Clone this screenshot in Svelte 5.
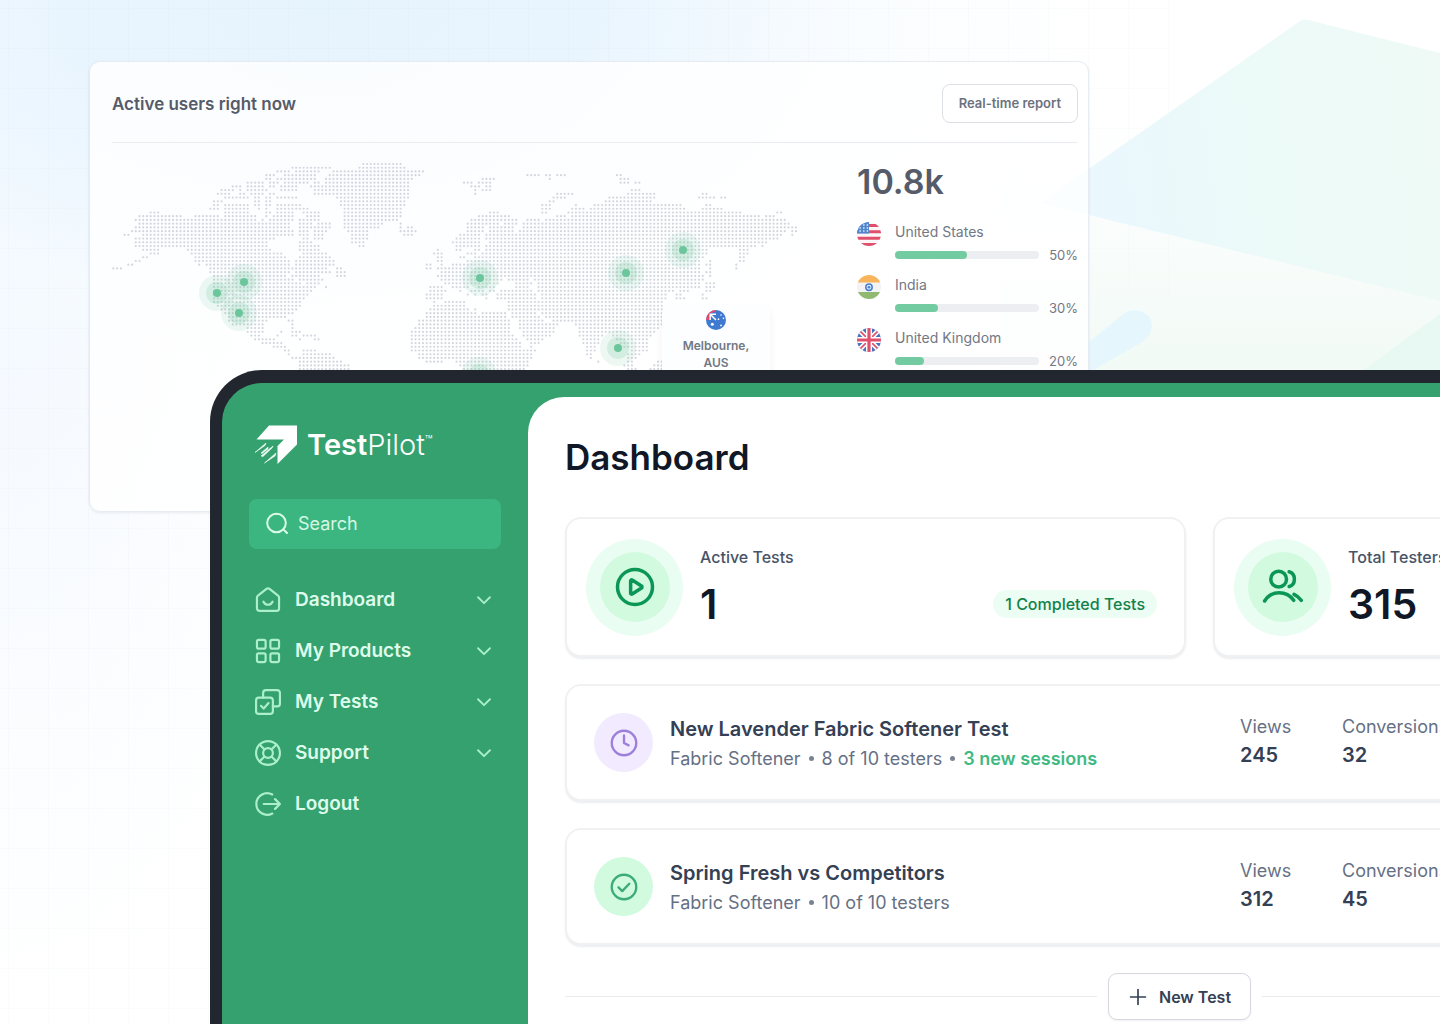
<script lang="ts">
  interface Country {
    name: string;
    flag: string;
    share: number;
  }

  interface Test {
    title: string;
    category: string;
    testers: string;
    sessions?: string;
    status: 'pending' | 'done';
    views: number;
    conversions: number;
  }

  const countries: Country[] = [
    { name: 'United States', flag: 'us', share: 50 },
    { name: 'India', flag: 'in', share: 30 },
    { name: 'United Kingdom', flag: 'gb', share: 20 },
  ];

  const navItems = [
    { label: 'Dashboard', icon: 'home', expandable: true },
    { label: 'My Products', icon: 'grid', expandable: true },
    { label: 'My Tests', icon: 'checks', expandable: true },
    { label: 'Support', icon: 'buoy', expandable: true },
    { label: 'Logout', icon: 'logout', expandable: false },
  ];

  const tests: Test[] = [
    {
      title: 'New Lavender Fabric Softener Test',
      category: 'Fabric Softener',
      testers: '8 of 10 testers',
      sessions: '3 new sessions',
      status: 'pending',
      views: 245,
      conversions: 32,
    },
    {
      title: 'Spring Fresh vs Competitors',
      category: 'Fabric Softener',
      testers: '10 of 10 testers',
      status: 'done',
      views: 312,
      conversions: 45,
    },
  ];

  // Land on the map, one string per row of dots, each with its runs of columns.
  const land: string[] = [
    '67-77',
    '48-58 66-78',
    '44-47 49-55 59-78 79-83',
    '41-43 46-54 58-82 111-114 116-117 119-121 135-136',
    '41-42 44-54 57-80 99-102 117-117 136-138',
    '36-40 42-44 46-52 54-55 57-79 94-96 98-101 136-138 140-141',
    '32-34 36-40 42-43 45-49 53-79 96-98 100-101',
    '29-32 34-34 36-41 45-49 54-79 97-97 99-101 139-141',
    '28-31 34-35 37-40 42-43 54-79 97-97 119-123 138-145 158-159',
    '30-36 38-39 41-42 44-49 60-79 118-121 133-145 157-161 163-164',
    '27-29 38-39 41-42 61-78 117-118 132-144',
    '27-28 30-36 38-39 41-42 44-50 61-78 115-117 124-124 129-152 159-160',
    '26-28 30-36 39-39 41-41 44-52 62-77 115-117 123-126 128-153 158-163',
    '10-12 30-36 41-42 44-48 51-55 62-77 101-103 115-116 122-168 178-179',
    '7-18 22-28 30-38 41-41 43-48 52-55 62-77 98-106 119-121 123-173 175-177',
    '6-38 40-40 42-48 50-55 62-76 96-108 111-114 116-180',
    '7-47 50-53 55-58 62-72 77-77 95-103 105-108 110-181',
    '6-47 50-58 62-71 77-77 79-80 95-99 101-107 110-183',
    '5-48 50-52 54-57 63-68 77-81 95-99 101-107 109-180 182-183',
    '3-4 8-48 50-52 54-56 64-68 78-80 93-98 100-179 182-182',
    '6-43 51-52 54-56 64-68 92-98 100-178',
    '6-41 50-53 64-67 91-98 101-175',
    '6-41 50-55 66-67 92-94 95-98 100-172 174-174',
    '8-12 20-42 50-55 87-87 92-93 97-98 100-159 168-170',
    '10-12 21-45 51-57 86-88 95-97 99-159 168-170',
    '8-9 22-46 50-58 87-88 93-94 97-158 168-169',
    '6-7 22-47 49-59 87-88 95-157 160-160 168-169',
    '4-5 23-23 25-47 49-59 84-85 88-88 91-157 159-160 167-167',
    '0-2 26-57 60-61 84-85 87-89 90-157 160-160 167-167',
    '26-47 49-58 60-62 88-157 159-160',
    '27-46 48-55 60-62 87-158 160-160',
    '27-48 50-56 88-104 106-111 113-158',
    '27-50 52-55 89-103 108-112 114-157 159-161',
    '27-54 57-57 85-88 91-95 98-102 108-111 114-157 159-161',
    '27-53 85-89 93-93 96-99 101-102 104-112 114-150 152-154 159-160',
    '27-52 84-88 95-95 97-97 99-100 103-113 115-148 151-152 158-158',
    '27-51 84-88 100-100 103-113 115-148 151-153 158-159',
    '27-50 86-86 89-94 106-147',
    '28-50 86-94 106-147',
    '29-49 85-95 97-97 106-147',
    '30-48 84-97 99-105 107-113 115-147',
    '31-46 84-105 107-114 116-147',
    '31-41 47-48 82-106 109-115 118-147',
    '32-40 48-48 82-106 109-119 124-147',
    '36-40 48-48 81-106 109-118 125-146',
    '36-40 45-45 48-50 80-106 110-118 125-145',
    '37-39 44-44 48-49 51-54 80-107 110-117 125-131 134-144',
    '38-43 50-50 54-55 80-108 111-115 126-130 135-143',
    '40-45 80-109 112-114 126-130 136-143',
    '43-46 80-109 112-112 127-129 137-143',
    '46-47 51-54 80-113 127-129 139-143',
    '47-47 51-58 82-112 127-128 138-141',
    '48-59 82-112 128-128 138-140',
    '50-61 84-88 92-111 130-130 138-139 146-147',
    '50-63 93-111 137-139 145-147',
    '50-63 94-110 138-140 144-147',
  ];

  const pitch = 3.73;

  const landPath = land
    .map((row, y) =>
      row
        .split(' ')
        .map((run) => {
          const [from, to] = run.split('-').map(Number);
          return `M${(1.4 + from * pitch).toFixed(2)} ${(2 + y * pitch).toFixed(2)}H${(1.6 + to * pitch).toFixed(2)}`;
        })
        .join('')
    )
    .join('');

  const pins = [
    [105, 131],
    [132, 120],
    [127, 151],
    [368, 116],
    [514, 111],
    [571, 88],
    [506, 186],
    [367, 213],
  ];
</script>

{#snippet unionJack()}
  <rect width="24" height="24" fill="#4a72b8" />
  <path d="M0 0L24 24M24 0L0 24" stroke="#fff" stroke-width="5" />
  <path d="M0 0L24 24M24 0L0 24" stroke="#e0506c" stroke-width="1.6" />
  <path d="M12 0V24M0 12H24" stroke="#fff" stroke-width="6" />
  <path d="M12 0V24M0 12H24" stroke="#e0506c" stroke-width="3.2" />
{/snippet}

{#snippet flag(code: string)}
  <svg class="flag" viewBox="0 0 24 24" aria-hidden="true">
    {#if code === 'us'}
      <rect width="24" height="24" fill="#fbf6f7" />
      <path d="M0 3.500H24M0 9.800H24M0 16.200H24M0 22.500H24" stroke="#e0506c" stroke-width="3" />
      <rect width="12" height="11.500" fill="#4f86cf" />
      <path d="M2.500 3H12M2.500 6H12M2.500 9H12" stroke="#e6effa" stroke-width="1.400" stroke-dasharray="1.400 2.200" />
    {:else if code === 'in'}
      <rect width="24" height="24" fill="#f3f3f5" />
      <rect width="24" height="7.5" fill="#f9b55c" />
      <rect y="17" width="24" height="7" fill="#90ba70" />
      <circle cx="12" cy="12.2" r="3.2" fill="#dfeafa" stroke="#4a7fd0" stroke-width="1.5" />
      <circle cx="12" cy="12.2" r="1.3" fill="#4a7fd0" />
    {:else if code === 'gb'}
      {@render unionJack()}
    {:else}
      <rect width="24" height="24" fill="#3f7ad0" />
      <path d="M0 12V0H12V2.500L4 4V12z" fill="#e5496a" />
      <path d="M5 12V5H12M5 5l7 7" fill="none" stroke="#fff" stroke-width="1.800" />
      <g fill="#fff">
        <circle cx="7.5" cy="17" r="1.8" />
        <circle cx="18" cy="6" r="1" />
        <circle cx="15" cy="11" r="1" />
        <circle cx="21" cy="10" r="1" />
        <circle cx="18" cy="18.5" r="1.1" />
      </g>
    {/if}
  </svg>
{/snippet}

{#snippet icon(name: string)}
  <svg class="icon" viewBox="0 0 24 24" aria-hidden="true">
    {#if name === 'home'}
      <path d="M1.8 9.6c0-.7.3-1.3.9-1.7l7.9-6.2c.8-.6 2-.6 2.8 0l7.9 6.2c.6.4.9 1 .9 1.700v10.200c0 1.200-1 2.200-2.200 2.200H4c-1.200 0-2.200-1-2.200-2.200z" />
      <path d="M7.800 13.600c.8 1.800 2.400 2.800 4.200 2.800s3.400-1 4.200-2.800" />
    {:else if name === 'grid'}
      <rect x="1.800" y="1.800" width="8" height="8" rx="1.600" />
      <rect x="14.200" y="1.800" width="8" height="8" rx="1.600" />
      <rect x="1.800" y="14.200" width="8" height="8" rx="1.600" />
      <rect x="14.200" y="14.200" width="8" height="8" rx="1.600" />
    {:else if name === 'checks'}
      <rect x="1" y="8" width="15.500" height="15" rx="2.500" />
      <path d="M7.500 8V3.500A2.500 2.500 0 0 1 10 1h10.500A2.500 2.500 0 0 1 23 3.500v10a2.500 2.500 0 0 1-2.500 2.500h-4" />
      <path d="M5.500 15.500l2.500 2.500 4.500-5" />
    {:else if name === 'buoy'}
      <circle cx="12" cy="12" r="11" />
      <circle cx="12" cy="12" r="4.500" />
      <path d="M4.200 4.200l4.600 4.600M15.200 15.200l4.600 4.600M19.800 4.200l-4.600 4.600M8.800 15.200l-4.600 4.600" />
    {:else if name === 'logout'}
      <path d="M16 3.200A10 10 0 1 0 16 20.800M8 12H23M18.500 7.500L23 12l-4.500 4.500" />
    {:else if name === 'search'}
      <path d="M22 21l-3.600-3.600M20.800 11a9.300 9.300 0 1 1-18.600 0 9.300 9.300 0 0 1 18.600 0z" />
    {:else if name === 'chevron'}
      <path d="M5.500 9l6.500 6.500L18.500 9" />
    {:else if name === 'play'}
      <circle cx="12" cy="12" r="10" />
      <path d="M9.500 8.500v7c0 .5.500.700.900.500l5.300-3.400c.4-.3.400-.9 0-1.200L10.400 8c-.4-.2-.9 0-.9.500z" />
    {:else if name === 'users'}
      <circle cx="9.500" cy="7.500" r="4.500" />
      <path d="M15.500 3.300c2.100.6 3 2.300 3 4.200s-.9 3.600-3 4.200" />
      <path d="M1.500 20C3.400 16.900 6.500 15.300 9.800 15.300s6.400 1.600 8.300 4.300M18.300 16.200c1.600.7 2.900 1.700 4.100 3.400" />
    {:else if name === 'clock'}
      <circle cx="12" cy="12" r="10.500" />
      <path d="M12 5.500V12l4 2" />
    {:else if name === 'check'}
      <circle cx="12" cy="12" r="10.500" />
      <path d="M7.300 12.300l3.200 3.200 6-6.300" />
    {:else if name === 'plus'}
      <path d="M12 3V21M3 12H21" />
    {/if}
  </svg>
{/snippet}

<div class="page">
  <div class="backdrop">
    <div class="gridlines"></div>
    <svg class="shapes" viewBox="0 0 440 380" aria-hidden="true">
      <defs>
        <linearGradient id="facet" x1="0" y1="0.600" x2="1" y2="0.500">
          <stop offset="0.100" stop-color="#eaf7fe" />
          <stop offset="0.550" stop-color="#ecfaf8" />
          <stop offset="1" stop-color="#effaf6" />
        </linearGradient>
        <linearGradient id="glow" x1="0" y1="0" x2="0" y2="1">
          <stop offset="0.300" stop-color="#f3faf8" stop-opacity="0" />
          <stop offset="1" stop-color="#f1faf5" />
        </linearGradient>
      </defs>
      <rect width="440" height="380" fill="url(#glow)" />
      <path d="M40 203L300 21q4-2 8-1L440 53V301z" fill="url(#facet)" />
      <path d="M440 314V380H350z" fill="#e8f9f4" />
      <path d="M88 343L122 315c16-13 38 3 27 20q-4 6-10 9L88 373z" fill="#e6f6fd" />
    </svg>
  </div>

  <section class="users">
    <header class="users-header">
      <h2>Active users right now</h2>
      <button class="report">Real-time report</button>
    </header>
    <div class="users-body">
      <div class="map">
        <svg viewBox="0 0 690 320" role="img" aria-label="World map of active users">
          <path class="land" d={landPath} stroke-dasharray="0 {pitch}" />
          {#each pins as [x, y]}
            <g class="pin">
              <circle cx={x} cy={y} r="18" opacity="0.120" />
              <circle cx={x} cy={y} r="11" opacity="0.200" />
              <circle cx={x} cy={y} r="4" />
            </g>
          {/each}
        </svg>
        <div class="place">
          {@render flag('au')}
          <span>Melbourne, AUS</span>
        </div>
      </div>
      <div class="totals">
        <strong class="total">10.8k</strong>
        <ul>
          {#each countries as country}
            <li>
              {@render flag(country.flag)}
              <div class="country">
                <span>{country.name}</span>
                <div class="share">
                  <div class="bar"><div class="fill" style="width: {country.share}%"></div></div>
                  <span>{country.share}%</span>
                </div>
              </div>
            </li>
          {/each}
        </ul>
      </div>
    </div>
  </section>

  <div class="tablet">
    <aside>
      <a class="logo" href="/">
        <svg viewBox="0 0 44 40" aria-hidden="true">
          <path d="M14 0.500H42V19.500L22.500 39V21L29 14.500H1.500z" fill="#fff" />
          <path d="M11 18L0 27.500 10 20.500zM18 21L6 31 8 31.500 17 23zM21 28L9.500 38 20 31zM13 22L6 28 7 28.500 13 24z" fill="#f0fdf6" stroke="#f0fdf6" stroke-width="0.600" />
        </svg>
        <span class="wordmark"><b>Test</b>Pilot<sup>™</sup></span>
      </a>
      <label class="search">
        {@render icon('search')}
        <input type="search" placeholder="Search" aria-label="Search" />
      </label>
      <nav>
        {#each navItems as item}
          <a href="/">
            {@render icon(item.icon)}
            <span>{item.label}</span>
            {#if item.expandable}
              <span class="chevron">{@render icon('chevron')}</span>
            {/if}
          </a>
        {/each}
      </nav>
    </aside>

    <main>
      <h1>Dashboard</h1>
      <div class="stats">
        <div class="card stat">
          <div class="ring"><div>{@render icon('play')}</div></div>
          <div class="stat-body">
            <span class="stat-label">Active Tests</span>
            <div class="stat-row">
              <strong>1</strong>
              <span class="badge">1 Completed Tests</span>
            </div>
          </div>
        </div>
        <div class="card stat">
          <div class="ring"><div>{@render icon('users')}</div></div>
          <div class="stat-body">
            <span class="stat-label">Total Testers</span>
            <div class="stat-row">
              <strong>315</strong>
            </div>
          </div>
        </div>
      </div>

      {#each tests as test}
        <article class="card test">
          <div class="status {test.status}">{@render icon(test.status === 'done' ? 'check' : 'clock')}</div>
          <div class="test-text">
            <h3>{test.title}</h3>
            <p>
              <span>{test.category}</span>
              <i></i>
              <span>{test.testers}</span>
              {#if test.sessions}
                <i></i>
                <b>{test.sessions}</b>
              {/if}
            </p>
          </div>
          <dl>
            <div>
              <dt>Views</dt>
              <dd>{test.views}</dd>
            </div>
            <div>
              <dt>Conversions</dt>
              <dd>{test.conversions}</dd>
            </div>
          </dl>
        </article>
      {/each}

      <div class="new-test">
        <button>{@render icon('plus')}New Test</button>
      </div>
    </main>
  </div>
</div>

<style>
  :global(body) {
    margin: 0;
  }

  .page {
    display: grid;
    min-height: 100vh;
    overflow: hidden;
    position: relative;
    background:
      radial-gradient(ellipse 760px 460px at 330px 0, #e6f4fe 0%, #e9f5fe 35%, rgba(246, 251, 255, 0.6) 70%, rgba(255, 255, 255, 0) 100%),
      radial-gradient(ellipse 360px 900px at 0 100px, #f0f7ff 0%, rgba(250, 252, 255, 0.8) 70%, rgba(255, 255, 255, 0) 100%),
      #fff;
    font-family: Inter, 'Liberation Sans', sans-serif;
    color: #475467;
  }

  .page * {
    box-sizing: border-box;
  }

  .page > * {
    grid-area: 1 / 1;
  }

  .backdrop {
    position: absolute;
    inset: 0;
  }

  .gridlines {
    position: absolute;
    inset: 0 270px 0 0;
    background:
      repeating-linear-gradient(90deg, rgba(120, 160, 170, 0.03) 0 1px, transparent 1px 40px) 8px 0,
      repeating-linear-gradient(rgba(120, 160, 170, 0.03) 0 1px, transparent 1px 40px) 0 8px;
  }

  .shapes {
    position: absolute;
    top: 0;
    right: 0;
    width: 440px;
    height: 380px;
  }

  h1,
  h2,
  h3,
  p,
  ul,
  dl,
  dd {
    margin: 0;
    padding: 0;
  }

  button {
    font-family: inherit;
    font-weight: 600;
    cursor: pointer;
  }

  .icon {
    display: block;
    flex: none;
    width: 26px;
    height: 26px;
    fill: none;
    stroke: currentColor;
    stroke-width: 2;
    stroke-linecap: round;
    stroke-linejoin: round;
  }

  .flag {
    flex: none;
    width: 24px;
    height: 24px;
    border-radius: 50%;
  }

  /* active users */
  .users {
    position: relative;
    align-self: start;
    width: 1000px;
    height: 451px;
    margin: 61px 0 0 89px;
    padding: 22px 10px 0 22px;
    border: 1px solid #e6ecf2;
    border-radius: 11px;
    background: rgba(255, 255, 255, 0.8);
    box-shadow: 0 1px 3px rgba(16, 24, 40, 0.08);
  }

  .users-header {
    display: flex;
    justify-content: space-between;
    align-items: center;
    padding-bottom: 19px;
    border-bottom: 1px solid #e9edf1;
  }

  h2 {
    font-size: 17px;
    line-height: 28px;
    font-weight: 600;
    color: #555b68;
  }

  .report {
    height: 39px;
    padding: 0 16px 2px;
    border: 1px solid #dcdfe4;
    border-radius: 8px;
    background: #fff;
    font-size: 13px;
    color: #6b7280;
  }

  .users-body {
    display: flex;
    justify-content: space-between;
    padding-top: 19px;
  }

  .map {
    position: relative;
    width: 690px;
  }

  .map > svg {
    display: block;
    width: 690px;
  }

  .land {
    fill: none;
    stroke: #d3d6df;
    stroke-width: 2.2;
    stroke-linecap: round;
  }

  .pin {
    fill: #6cc69c;
  }

  .place {
    position: absolute;
    top: 143px;
    left: 550px;
    display: flex;
    flex-direction: column;
    align-items: center;
    gap: 7px;
    width: 108px;
    padding: 5px 20px 16px;
    border-radius: 8px;
    background: #fcfeff;
    box-shadow: 0 4px 8px rgba(16, 24, 40, 0.06);
    font-size: 12px;
    line-height: 17px;
    font-weight: 600;
    text-align: center;
    color: #727885;
  }

  .place .flag {
    width: 20px;
    height: 20px;
  }

  .totals {
    width: 221px;
  }

  .total {
    display: block;
    margin-bottom: 20px;
    font-size: 34px;
    line-height: 40px;
    font-weight: 600;
    color: #555b68;
  }

  ul {
    display: flex;
    flex-direction: column;
    gap: 10px;
    list-style: none;
  }

  li {
    display: flex;
    gap: 14px;
    font-size: 14px;
    line-height: 20px;
    color: #727885;
  }

  .country {
    flex: 1;
    display: flex;
    flex-direction: column;
    gap: 3px;
  }

  .share {
    display: flex;
    justify-content: space-between;
    align-items: center;
    font-size: 13px;
  }

  .bar {
    width: 144px;
    height: 8px;
    border-radius: 4px;
    background: #eceef1;
  }

  .fill {
    height: 8px;
    border-radius: 4px;
    background: #73cba2;
  }

  /* tablet */
  .tablet {
    position: relative;
    display: flex;
    width: calc(100vw + 193px);
    margin: 370px 0 0 210px;
    border: solid #22262f;
    border-width: 13px 12px 0;
    border-radius: 52px 52px 0 0;
    background: #35a16f;
  }

  aside {
    flex: none;
    width: 306px;
    padding: 42px 27px 0;
  }

  .logo {
    display: flex;
    align-items: center;
    gap: 8px;
    height: 40px;
    padding-left: 6px;
    color: #fff;
    text-decoration: none;
  }

  .logo svg {
    width: 44px;
    height: 40px;
  }

  .wordmark {
    font-size: 29px;
    line-height: 40px;
    font-weight: 300;
  }

  .wordmark b {
    font-weight: 600;
  }

  .wordmark sup {
    font-size: 13px;
    line-height: 10px;
    vertical-align: 10px;
  }

  .search {
    display: flex;
    align-items: center;
    gap: 9px;
    height: 50px;
    margin: 34px 0 25px;
    padding: 0 16px;
    border-radius: 8px;
    background: #3cb680;
    color: #dcfbe9;
  }

  .search .icon {
    width: 24px;
    height: 24px;
  }

  .search input {
    flex: 1;
    min-width: 0;
    padding: 0;
    border: 0;
    outline: 0;
    background: none;
    font: 400 18px/28px Inter, sans-serif;
    color: inherit;
  }

  .search input::placeholder {
    color: #d5f8e5;
    opacity: 1;
  }

  nav a {
    display: flex;
    align-items: center;
    gap: 14px;
    height: 51px;
    padding: 0 6px;
    font-size: 19px;
    font-weight: 600;
    color: #defceb;
    text-decoration: none;
  }

  nav .icon {
    color: #abf0c8;
  }

  .chevron {
    margin-left: auto;
  }

  .chevron .icon {
    width: 22px;
    height: 22px;
  }

  main {
    flex: 1;
    display: flex;
    flex-direction: column;
    gap: 27px;
    margin-top: 14px;
    padding: 38px 37px 0;
    border-radius: 36px 0 0 0;
    background: #fff;
  }

  h1 {
    margin-bottom: 11px;
    font-size: 35px;
    line-height: 44px;
    font-weight: 600;
    color: #101828;
  }

  .stats {
    display: grid;
    grid-template-columns: 31fr 29fr;
    gap: 27px;
  }

  .card {
    display: flex;
    align-items: center;
    gap: 17px;
    border: 2px solid #f0f1f3;
    border-radius: 16px;
    background: #fff;
    box-shadow: 0 2px 2px rgba(16, 24, 40, 0.08);
  }

  .stat {
    height: 140px;
    padding: 0 27px 0 19px;
  }

  .ring,
  .ring div,
  .status {
    display: grid;
    place-items: center;
    flex: none;
    border-radius: 50%;
  }

  .ring {
    width: 97px;
    height: 97px;
    background: #eafdf2;
    color: #0b9655;
  }

  .ring div {
    width: 70px;
    height: 70px;
    background: #d1fadf;
  }

  .ring .icon {
    width: 42px;
    height: 42px;
  }

  .stat-body {
    flex: 1;
  }

  .stat-label {
    display: block;
    margin-bottom: 10px;
    font-size: 16px;
    line-height: 24px;
    font-weight: 500;
  }

  .stat-row {
    display: flex;
    justify-content: space-between;
    align-items: center;
  }

  .stat-row strong {
    font-size: 41px;
    line-height: 50px;
    font-weight: 600;
    color: #101828;
  }

  .badge {
    padding: 0 12px;
    border-radius: 14px;
    background: #ecfdf3;
    font-size: 16px;
    line-height: 28px;
    font-weight: 500;
    color: #12814a;
  }

  .test {
    height: 117px;
    padding: 0 27px;
  }

  .status {
    width: 59px;
    height: 59px;
  }

  .status .icon {
    width: 28px;
    height: 28px;
  }

  .pending {
    background: #f2eafe;
    color: #9c7edb;
  }

  .done {
    background: #d1fadf;
    color: #3bab77;
  }

  .test-text {
    flex: 1;
    padding-top: 2px;
  }

  h3 {
    font-size: 20px;
    line-height: 29px;
    font-weight: 600;
    color: #344054;
  }

  p {
    display: flex;
    align-items: center;
    gap: 8px;
    font-size: 18px;
    line-height: 29px;
    color: #667085;
  }

  p i {
    width: 5px;
    height: 5px;
    border-radius: 50%;
    background: #7a8394;
  }

  p b {
    font-weight: 600;
    color: #3fb982;
  }

  dl {
    flex: 0 0 525px;
    display: flex;
    padding-bottom: 4px;
    line-height: 29px;
  }

  dl div {
    width: 102px;
  }

  dt {
    font-size: 18px;
    color: #667085;
  }

  dd {
    font-size: 20px;
    font-weight: 600;
    color: #344054;
  }

  .new-test {
    display: flex;
    align-items: center;
    gap: 11px;
    padding-top: 1px;
  }

  .new-test::before,
  .new-test::after {
    content: '';
    flex: 1;
    height: 1px;
    background: #e9ebee;
  }

  .new-test button {
    display: flex;
    align-items: center;
    gap: 11px;
    height: 47px;
    padding: 0 19px;
    border: 1px solid #d5d9df;
    border-radius: 9px;
    background: #fff;
    box-shadow: 0 1px 2px rgba(16, 24, 40, 0.06);
    font-size: 16px;
    color: #344054;
  }

  .new-test .icon {
    width: 20px;
    height: 20px;
  }
</style>
